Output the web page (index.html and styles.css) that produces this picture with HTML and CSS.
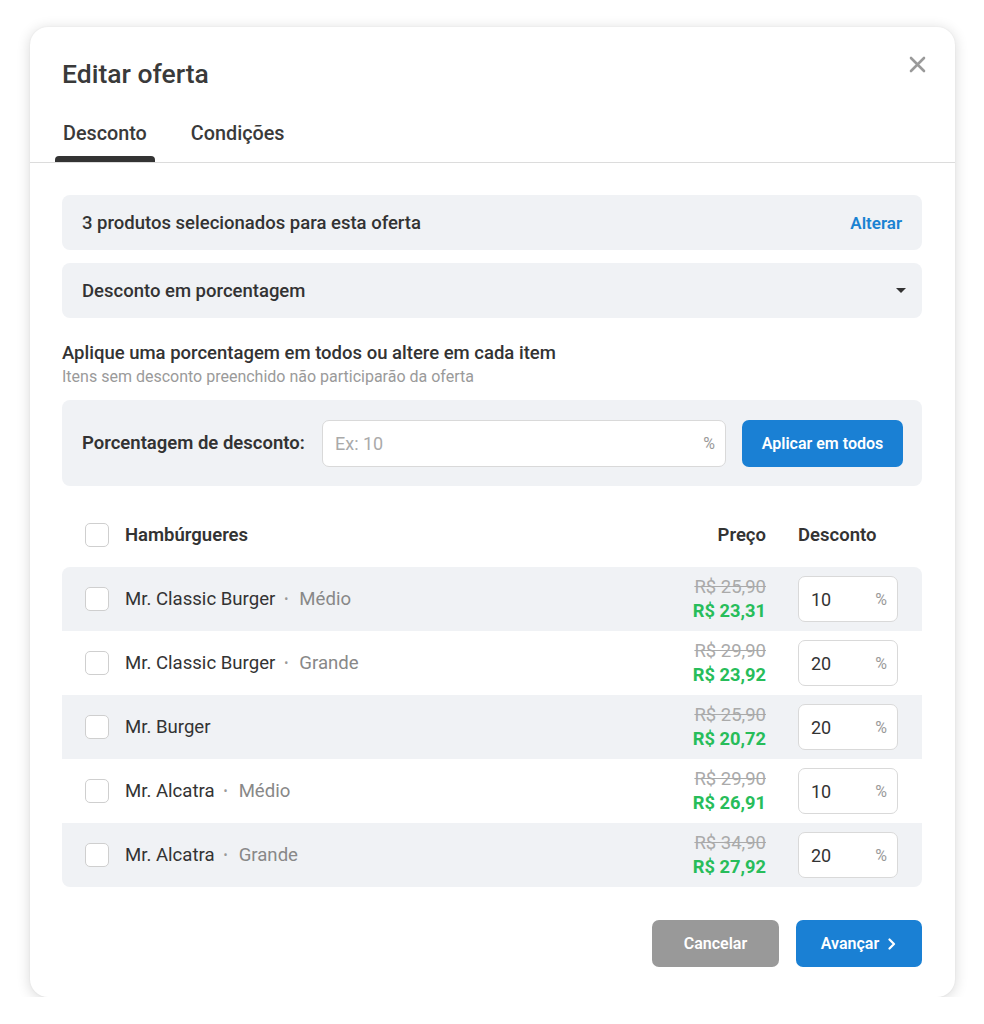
FILE: index.html
```html
<!DOCTYPE html>
<html lang="pt-BR">
<head>
<meta charset="utf-8">
<title>Editar oferta</title>
<link rel="stylesheet" href="styles.css">
</head>
<body>
<div class="modal">
  <button class="close" aria-label="Fechar">
    <svg width="17" height="17" viewBox="0 0 17 17"><path d="M2 2 L15 15 M15 2 L2 15" stroke="#9a9a9a" stroke-width="2.6" stroke-linecap="round"/></svg>
  </button>
  <div class="header">
    <h1 class="title">Editar oferta</h1>
  </div>
  <div class="tabs">
    <div class="tab active">Desconto</div>
    <div class="tab">Condições</div>
  </div>
  <div class="body">
    <div class="box box-row">
      <span class="box-text">3 produtos selecionados para esta oferta</span>
      <a class="link">Alterar</a>
    </div>
    <div class="box box-row select">
      <span class="box-text">Desconto em porcentagem</span>
      <span class="caret"></span>
    </div>
    <div class="section-title">Aplique uma porcentagem em todos ou altere em cada item</div>
    <div class="section-sub">Itens sem desconto preenchido não participarão da oferta</div>
    <div class="box apply">
      <span class="apply-label">Porcentagem de desconto:</span>
      <div class="input big">
        <span class="placeholder">Ex: 10</span>
        <span class="pct">%</span>
      </div>
      <button class="btn primary apply-btn">Aplicar em todos</button>
    </div>

    <div class="table-head">
      <span class="check"></span>
      <span class="th-name">Hambúrgueres</span>
      <span class="th-price">Preço</span>
      <span class="th-disc">Desconto</span>
    </div>
    <div class="table">
      <div class="row">
        <span class="check"></span>
        <span class="name">Mr. Classic Burger<span class="dot">•</span><span class="variant">Médio</span></span>
        <span class="price"><s class="old">R$ 25,90</s><b class="new">R$ 23,31</b></span>
        <div class="input small"><span class="val">10</span><span class="pct">%</span></div>
      </div>
      <div class="row">
        <span class="check"></span>
        <span class="name">Mr. Classic Burger<span class="dot">•</span><span class="variant">Grande</span></span>
        <span class="price"><s class="old">R$ 29,90</s><b class="new">R$ 23,92</b></span>
        <div class="input small"><span class="val">20</span><span class="pct">%</span></div>
      </div>
      <div class="row">
        <span class="check"></span>
        <span class="name">Mr. Burger</span>
        <span class="price"><s class="old">R$ 25,90</s><b class="new">R$ 20,72</b></span>
        <div class="input small"><span class="val">20</span><span class="pct">%</span></div>
      </div>
      <div class="row">
        <span class="check"></span>
        <span class="name">Mr. Alcatra<span class="dot">•</span><span class="variant">Médio</span></span>
        <span class="price"><s class="old">R$ 29,90</s><b class="new">R$ 26,91</b></span>
        <div class="input small"><span class="val">10</span><span class="pct">%</span></div>
      </div>
      <div class="row">
        <span class="check"></span>
        <span class="name">Mr. Alcatra<span class="dot">•</span><span class="variant">Grande</span></span>
        <span class="price"><s class="old">R$ 34,90</s><b class="new">R$ 27,92</b></span>
        <div class="input small"><span class="val">20</span><span class="pct">%</span></div>
      </div>
    </div>

    <div class="footer">
      <button class="btn secondary">Cancelar</button>
      <button class="btn primary next">Avançar
        <svg width="10" height="12" viewBox="0 0 10 12"><path d="M2.5 1.5 L7 6 L2.5 10.5" fill="none" stroke="#fff" stroke-width="2.2" stroke-linecap="round" stroke-linejoin="round"/></svg>
      </button>
    </div>
  </div>
</div>
</body>
</html>
```

FILE: styles.css
```css
* { box-sizing: border-box; }
html, body { margin: 0; padding: 0; background: #fff; }
body {
  font-family: Roboto, "Noto Sans", "Liberation Sans", sans-serif;
  color: #333;
  padding: 27px 29px 0 30px;
}
.modal {
  position: relative;
  width: 925px;
  height: 970px;
  background: #fff;
  border-radius: 18px;
  box-shadow: 0 2px 14px rgba(0, 0, 0, 0.16), 0 0 2px rgba(0,0,0,0.06);
}
.close {
  position: absolute;
  top: 29px;
  right: 29px;
  width: 17px;
  height: 17px;
  padding: 0;
  border: 0;
  background: none;
  display: flex;
}
.header { padding: 29px 32px 0; }
.title {
  margin: 0;
  font-size: 26.5px;
  line-height: 36px;
  font-weight: 500;
  color: #3a3a3a;
}
.tabs {
  margin-top: 20px;
  padding-left: 25px;
  display: flex;
  gap: 28px;
  border-bottom: 1px solid #dcdcdc;
}
.tab {
  position: relative;
  padding: 10px 8px 16px;
  font-size: 19.8px;
  line-height: 24px;
  font-weight: 500;
  color: #3a3a3a;
}
.tab.active::after {
  content: "";
  position: absolute;
  left: 0;
  right: 0;
  bottom: 0;
  height: 6px;
  border-radius: 4px 4px 0 0;
  background: #333;
}
.body { padding: 32px 33px 31px 32px; }
.box {
  background: #f0f2f5;
  border-radius: 8px;
}
.box-row {
  height: 55px;
  padding: 0 20px;
  display: flex;
  align-items: center;
  justify-content: space-between;
}
.select { margin-top: 13px; padding-right: 16px; }
.box-text { font-size: 18.5px; font-weight: 500; color: #333; }
.link { color: #1a82d2; font-weight: 600; font-size: 17px; }
.caret {
  width: 0; height: 0;
  border-left: 5px solid transparent;
  border-right: 5px solid transparent;
  border-top: 5px solid #333;
}
.section-title {
  margin-top: 24px;
  font-size: 18.5px;
  line-height: 22px;
  font-weight: 500;
  color: #333;
}
.section-sub {
  margin-top: 3px;
  font-size: 16px;
  line-height: 20px;
  color: #9a9a9a;
}
.apply {
  margin-top: 13px;
  height: 86px;
  padding: 0 19px 0 20px;
  display: flex;
  align-items: center;
}
.apply-label {
  width: 240px;
  font-size: 18.5px;
  font-weight: 600;
  color: #333;
}
.input {
  background: #fff;
  border: 1px solid #d9d9d9;
  border-radius: 7px;
  display: flex;
  align-items: center;
  justify-content: space-between;
}
.input.big {
  flex: 1;
  height: 47px;
  padding: 0 10px 0 12px;
  margin-right: 16px;
}
.placeholder { color: #aaa; font-size: 18px; }
.pct { color: #9a9a9a; font-size: 16px; }
.btn {
  border: 0;
  border-radius: 7px;
  height: 47px;
  color: #fff;
  font-family: inherit;
  font-size: 16px;
  font-weight: 600;
  display: flex;
  align-items: center;
  justify-content: center;
}
.primary { background: #1a80d4; }
.secondary { background: #999; }
.apply-btn { width: 161px; }
.table-head {
  margin-top: 16px;
  height: 65px;
  padding: 0 24px 0 23px;
  display: flex;
  align-items: center;
}
.check {
  flex: none;
  width: 24px;
  height: 24px;
  border: 1px solid #cfcfcf;
  border-radius: 5px;
  background: #fff;
  margin-right: 16px;
}
.th-name { flex: 1; font-size: 18.5px; font-weight: 600; color: #333; }
.th-price { font-size: 18.5px; font-weight: 600; color: #333; text-align: right; margin-right: 32px; }
.th-disc { width: 100px; font-size: 18.5px; font-weight: 600; color: #333; }
.table {
  border-radius: 8px;
  overflow: hidden;
}
.row {
  height: 64px;
  padding: 0 24px 0 23px;
  display: flex;
  align-items: center;
}
.row:nth-child(odd) { background: #f0f2f5; }
.name { flex: 1; font-size: 18.6px; color: #333; display: flex; align-items: center; }
.dot { font-size: 12px; color: #999; margin: 0 11px 0 9px; }
.variant { color: #888; }
.price {
  display: flex;
  flex-direction: column;
  align-items: flex-end;
  margin-right: 32px;
}
.old { font-size: 18.5px; line-height: 24px; color: #aaa; text-decoration: line-through; }
.new { font-size: 18.3px; line-height: 24px; color: #27bd5a; font-weight: 700; }
.input.small {
  width: 100px;
  height: 46px;
  padding: 0 10px 0 12px;
}
.val { font-size: 18px; color: #333; }
.footer {
  margin-top: 33px;
  display: flex;
  justify-content: flex-end;
  gap: 17px;
}
.footer .secondary { width: 127px; }
.footer .next { width: 126px; gap: 8px; }
.next svg { margin-top: 1px; }
```
